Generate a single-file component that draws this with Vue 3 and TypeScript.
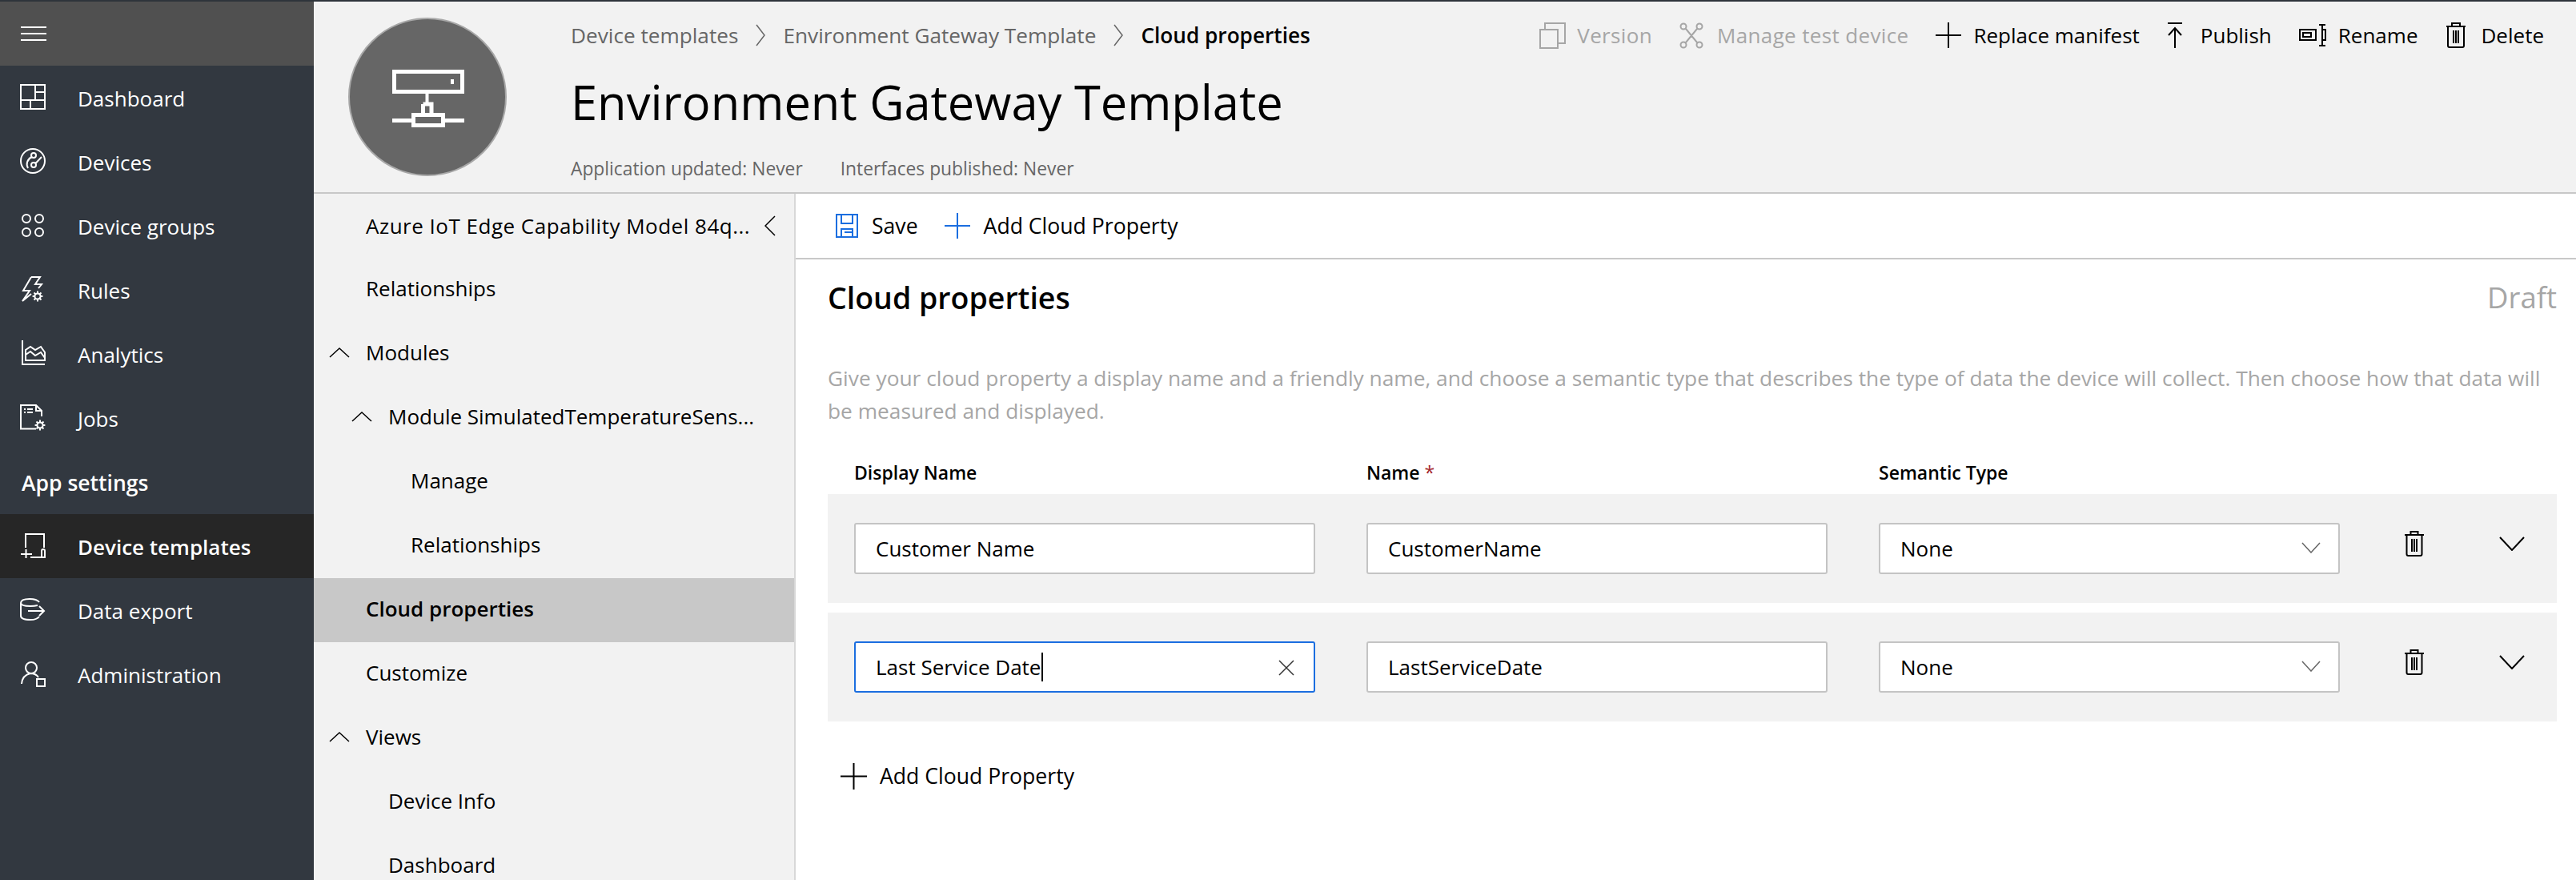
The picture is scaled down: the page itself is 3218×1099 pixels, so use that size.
<script setup lang="ts">
const circ = (cx: number, cy: number, r: number) =>
  `M${cx - r} ${cy}a${r} ${r} 0 1 0 ${2 * r} 0a${r} ${r} 0 1 0 ${-2 * r} 0`
const gear = (cx: number, cy: number) => {
  let d = circ(cx, cy, 3.6)
  for (let i = 0; i < 8; i++) {
    const a = (i * Math.PI) / 4
    d += `M${(cx + 3.6 * Math.cos(a)).toFixed(1)} ${(cy + 3.6 * Math.sin(a)).toFixed(1)}L${(cx + 6.4 * Math.cos(a)).toFixed(1)} ${(cy + 6.4 * Math.sin(a)).toFixed(1)}`
  }
  return d
}
const trash = 'M1 5H25M8.500 5V1H17.500V5M3.500 5V29Q3.500 31 5.500 31H20.500Q22.500 31 22.500 29V5M10 10V26M13 10V26M16 10V26'

const mainNav = [
  { label: 'Dashboard', d: 'M1 1H31V31H1ZM19 1V20M19 10H31M1 20H31M13 20V31' },
  { label: 'Devices', d: circ(16, 16, 15) + circ(17, 9, 3) + circ(17, 21, 3) + 'M14.500 11C9 14 7 20 10 25M19.500 19L27 11' },
  { label: 'Device groups', d: circ(8, 8, 5) + circ(24, 8, 5) + circ(8, 25, 5) + circ(24, 25, 5) },
  { label: 'Rules', d: 'M14 1H25L19 10H27L23 15M14 1L4 18H12L3 31L14 22' + gear(22, 25) },
  { label: 'Analytics', d: 'M3 0V30H31M7 25V12L13 8L19 12L26 8L31 15V25ZM7 25H31M7 18L13 14L19 19L26 15L31 22' },
  { label: 'Jobs', d: 'M20 30.500H1V1H20L27 8V15M20 1V8H27M5 6H7M9 6H16M5 10H7M9 10H16' + gear(25, 26) },
]
const settingsNav = [
  { label: 'Device templates', active: true, d: 'M7 19V2H30V19M1 27H15M7.500 21V32M13 31H28M27 23Q27 21 29 21Q31 21 31 23V31H27Z' },
  { label: 'Data export', active: false, d: 'M1 8V24Q1 29 13 29Q21 29 24 25M1 8Q1 3 12 3Q21 3 24 7M1 8Q1 12 13 12Q18 12 22 11M10 18H30M24 12L30 18L24 24' },
  { label: 'Administration', active: false, d: circ(14, 9, 7) + 'M2 29Q3 18 13 16Q20 16 23 21M21 23H31V32H21Z' },
]
const actions = [
  { label: 'Version', off: true, w: 33, gap: 15, d: 'M1 9H23V32H1ZM7 9V1H32V26H23' },
  { label: 'Manage test device', off: true, w: 30, gap: 18, d: circ(5, 5, 3.500) + circ(25, 5, 3.500) + circ(5, 28, 3.500) + circ(25, 28, 3.500) + 'M8 8L22 25M22 8L8 25' },
  { label: 'Replace manifest', off: false, w: 33, gap: 15, d: 'M0 16H32M16 0V32' },
  { label: 'Publish', off: false, w: 20, gap: 23, d: 'M1 1H19M10 32V7M2 16L10 7L18 16' },
  { label: 'Rename', off: false, w: 34, gap: 16, d: 'M1 9H21V22H1ZM5 13H15V18H5ZM29 4V28M25 3H33M25 29H33M29 9H33V22H29' },
  { label: 'Delete', off: false, w: 26, gap: 20, d: 'M1 5H25M8 5V1H18V5M3 5V29Q3 31 5 31H21Q23 31 23 29V5M10 10V26M13 10V26M16 10V26' },
]
const tree = [
  { label: 'Azure IoT Edge Capability Model 84q...', level: 0, chev: false, back: true, sel: false },
  { label: 'Relationships', level: 0, chev: false, back: false, sel: false },
  { label: 'Modules', level: 0, chev: true, back: false, sel: false },
  { label: 'Module SimulatedTemperatureSens...', level: 1, chev: true, back: false, sel: false },
  { label: 'Manage', level: 2, chev: false, back: false, sel: false },
  { label: 'Relationships', level: 2, chev: false, back: false, sel: false },
  { label: 'Cloud properties', level: 0, chev: false, back: false, sel: true },
  { label: 'Customize', level: 0, chev: false, back: false, sel: false },
  { label: 'Views', level: 0, chev: true, back: false, sel: false },
  { label: 'Device Info', level: 1, chev: false, back: false, sel: false },
  { label: 'Dashboard', level: 1, chev: false, back: false, sel: false },
]
const rows = [
  { display: 'Customer Name', name: 'CustomerName', focus: false },
  { display: 'Last Service Date', name: 'LastServiceDate', focus: true },
]
</script>

<template>
  <div class="page">
    <div class="strip"></div>
    <div class="body">
      <aside class="side">
        <div class="burger">
          <svg width="32" height="18" viewBox="0 0 32 18"><path d="M0 1H32M0 9H32M0 17H32" /></svg>
        </div>
        <div class="snav first">
          <div v-for="n in mainNav" :key="n.label" class="sitem">
            <svg class="sicon" width="34" height="34" viewBox="0 0 34 34"><path :d="n.d" /></svg>
            <span>{{ n.label }}</span>
          </div>
        </div>
        <div class="sgroup">App settings</div>
        <div v-for="n in settingsNav" :key="n.label" class="sitem" :class="{ active: n.active }">
          <svg class="sicon" width="34" height="34" viewBox="0 0 34 34"><path :d="n.d" /></svg>
          <span>{{ n.label }}</span>
        </div>
      </aside>

      <div class="main">
        <header class="head">
          <div class="avatar">
            <svg width="94" height="78" viewBox="0 0 94 78">
              <path class="thick" d="M5.500 7.500H90.500V32.500H5.500ZM41.500 48H52V62M41.500 48V62M3 68.500H30M66 68.500H93M29.500 61.500H66.500V74.500H29.500Z" />
              <path class="stem" d="M46.500 33V48" />
              <path class="dot" d="M76 17h4v6h-4z" />
            </svg>
          </div>
          <div class="headtext">
            <div class="toprow">
              <nav class="crumbs">
                <span>Device templates</span>
                <svg class="cr" width="12" height="28" viewBox="0 0 12 28"><path d="M1 1L11 14L1 27" /></svg>
                <span>Environment Gateway Template</span>
                <svg class="cr" width="12" height="28" viewBox="0 0 12 28"><path d="M1 1L11 14L1 27" /></svg>
                <span class="cur">Cloud properties</span>
              </nav>
              <div class="actions">
                <div v-for="a in actions" :key="a.label" class="action" :class="{ off: a.off }">
                  <svg :width="a.w + 2" height="34" :viewBox="`-1 -1 ${a.w + 2} 34`" :style="{ marginRight: a.gap - 2 + 'px' }"><path :d="a.d" /></svg>
                  <span>{{ a.label }}</span>
                </div>
              </div>
            </div>
            <h1>Environment Gateway Template</h1>
            <div class="meta">
              <span>Application updated: Never</span>
              <span>Interfaces published: Never</span>
            </div>
          </div>
        </header>

        <div class="lower">
          <nav class="tree">
            <div v-for="(t, i) in tree" :key="i" class="node" :class="['l' + t.level, { sel: t.sel, wide: t.back }]">
              <svg v-if="t.chev" class="chev" width="26" height="14" viewBox="0 0 26 14"><path d="M1 13L13 2L25 13" /></svg>
              <span>{{ t.label }}</span>
              <svg v-if="t.back" class="back" width="14" height="26" viewBox="0 0 14 26"><path d="M13 1L1 13L13 25" /></svg>
            </div>
          </nav>

          <section class="content">
            <div class="toolbar">
              <div class="tool">
                <svg class="blue" width="28" height="30" viewBox="0 0 28 30"><path d="M1 1H27V29H1ZM7 1V12H21V1M7 29V19H21V29M11 23H21" /></svg>
                <span>Save</span>
              </div>
              <div class="tool">
                <svg class="blue" width="32" height="32" viewBox="0 0 32 32"><path d="M0 16H32M16 0V32" /></svg>
                <span>Add Cloud Property</span>
              </div>
            </div>
            <div class="pane">
              <div class="titlerow">
                <h2>Cloud properties</h2>
                <span class="draft">Draft</span>
              </div>
              <p class="desc">Give your cloud property a display name and a friendly name, and choose a semantic type that describes the type of data the device will collect. Then choose how that data will be measured and displayed.</p>
              <div class="grid labels">
                <label>Display Name</label>
                <label>Name <em>*</em></label>
                <label>Semantic Type</label>
              </div>
              <div v-for="r in rows" :key="r.name" class="grid prow">
                <div class="field" :class="{ focus: r.focus }">
                  <span>{{ r.display }}</span>
                  <i v-if="r.focus" class="caret"></i>
                  <svg v-if="r.focus" class="clear" width="20" height="20" viewBox="0 0 20 20"><path d="M1 1L19 19M19 1L1 19" /></svg>
                </div>
                <div class="field"><span>{{ r.name }}</span></div>
                <div class="field">
                  <span>None</span>
                  <svg class="select" width="24" height="14" viewBox="0 0 24 14"><path d="M1 1L12 13L23 1" /></svg>
                </div>
                <div class="rowicons">
                  <svg class="trash" width="26" height="32" viewBox="0 0 26 32"><path :d="trash" /></svg>
                  <svg class="expand" width="32" height="18" viewBox="0 0 32 18"><path d="M1 1L16 17L31 1" /></svg>
                </div>
              </div>
              <div class="addrow">
                <svg width="33" height="33" viewBox="0 0 33 33"><path d="M0 16.500H33M16.500 0V33" /></svg>
                <span>Add Cloud Property</span>
              </div>
            </div>
          </section>
        </div>
      </div>
    </div>
  </div>
</template>

<style>
html, body { margin: 0; overflow: hidden; background: #fff; }
</style>

<style scoped>
.page { width: 3218px; height: 1099px; overflow: hidden; display: flex; flex-direction: column; font-family: "Open Sans", "Noto Sans", sans-serif; font-size: 26px; color: #000; }
svg { fill: none; stroke: currentColor; stroke-width: 2; flex: none; display: block; }
.strip { height: 2px; background: #2e343b; flex: none; }
.body { flex: 1; display: flex; min-height: 0; }

.side { width: 392px; flex: none; background: #323840; color: #fff; }
.burger { height: 80px; background: #505050; display: flex; align-items: center; padding-left: 26px; }
.sitem { height: 80px; display: flex; align-items: center; padding-left: 25px; }
.sitem span { padding-top: 2px; }
.sicon { margin-right: 38px; }
.sitem.active { background: #262626; font-weight: 600; }
.sgroup { height: 80px; padding: 2px 0 0 27px; box-sizing: border-box; display: flex; align-items: center; font-weight: 600; font-size: 26.500px; }

.main { flex: 1; min-width: 0; display: flex; flex-direction: column; }
.head { height: 238px; flex: none; display: flex; background: #f2f2f2; border-bottom: 2px solid #c8c8c8; box-sizing: content-box; }
.avatar { width: 198px; height: 198px; box-sizing: border-box; margin: 20px 80px 0 43px; border: 2px solid #a8a8a8; border-radius: 50%; background: #666; color: #fff; display: flex; align-items: center; justify-content: center; flex: none; }
.thick { stroke-width: 5; }
.stem { stroke-width: 4; }
.dot { fill: #fff; stroke: none; }
.headtext { flex: 1; min-width: 0; padding-right: 40px; }
.toprow { height: 84px; display: flex; align-items: center; justify-content: space-between; }
.crumbs { display: flex; align-items: center; color: #666; font-size: 26.200px; }
.cr { margin: 0 22px; color: #666; stroke-width: 1.500; }
.cur { color: #000; font-weight: 600; }
.actions { display: flex; align-items: center; gap: 33px; }
.action { display: flex; align-items: center; }
.action.off { color: #a6a6a6; letter-spacing: 0.350px; }
h1 { margin: 0; height: 82px; line-height: 82px; font-weight: 400; font-size: 59.600px; }
.meta { margin-top: 27px; display: flex; gap: 47px; color: #666; font-size: 22.800px; }

.lower { flex: 1; min-height: 0; display: flex; }
.tree { width: 600px; flex: none; background: #f2f2f2; border-right: 2px solid #d8d8d8; overflow: hidden; }
.node { height: 80px; box-sizing: border-box; padding-bottom: 4px; position: relative; display: flex; align-items: center; font-size: 26px; }
.node.wide { letter-spacing: 0.500px; padding-bottom: 0; }
.node.l0 { padding-left: 65px; }
.node.l1 { padding-left: 93px; }
.node.l2 { padding-left: 121px; }
.node.sel { background: #c8c8c8; font-weight: 600; }
.chev { position: absolute; top: 31px; stroke-width: 1.500; }
.l0 .chev { left: 19px; }
.l1 .chev { left: 47px; }
.back { position: absolute; left: 563px; top: 27px; stroke-width: 1.500; }

.content { flex: 1; min-width: 0; display: flex; flex-direction: column; }
.toolbar { height: 80px; flex: none; border-bottom: 2px solid #c8c8c8; display: flex; align-items: center; padding-left: 50px; gap: 33px; font-size: 26.600px; }
.tool { display: flex; align-items: center; gap: 17px; }
.blue { color: #1b6ee0; }
.pane { padding: 0 24px 0 40px; }
.titlerow { height: 94px; display: flex; align-items: center; justify-content: space-between; }
h2 { margin: 0; font-size: 37.500px; font-weight: 600; }
.draft { font-size: 36.500px; color: #a6a6a6; }
.desc { margin: 34px 0 0; font-size: 26.300px; line-height: 41px; color: #a6a6a6; height: 82px; }
.grid { display: grid; grid-template-columns: 576px 576px 576px 1fr; column-gap: 64px; padding: 0 0 0 33px; }
.labels { height: 54px; align-items: center; margin-top: 29px; font-size: 23px; font-weight: 600; }
em { color: #a4262c; font-style: normal; font-weight: 400; }
.prow { background: #f2f2f2; height: 136px; align-items: center; margin-bottom: 12px; }
.field { height: 64px; box-sizing: border-box; background: #fff; border: 2px solid #c4c4c4; border-radius: 3px; position: relative; display: flex; align-items: center; padding-left: 25px; }
.field.focus { border-color: #1b6ee0; }
.caret { display: block; width: 2px; height: 36px; background: #000; margin-left: 1px; }
.clear { position: absolute; right: 24px; top: 21px; color: #333; stroke-width: 1.500; }
.select { position: absolute; right: 22px; top: 22px; color: #666; stroke-width: 1.500; }
.rowicons { position: relative; height: 64px; }
.trash { position: absolute; left: 16px; top: 10px; }
.expand { position: absolute; left: 135px; top: 17px; }
.addrow { display: flex; align-items: center; gap: 16px; padding-left: 16px; margin-top: 50px; font-size: 26.600px; }
</style>
